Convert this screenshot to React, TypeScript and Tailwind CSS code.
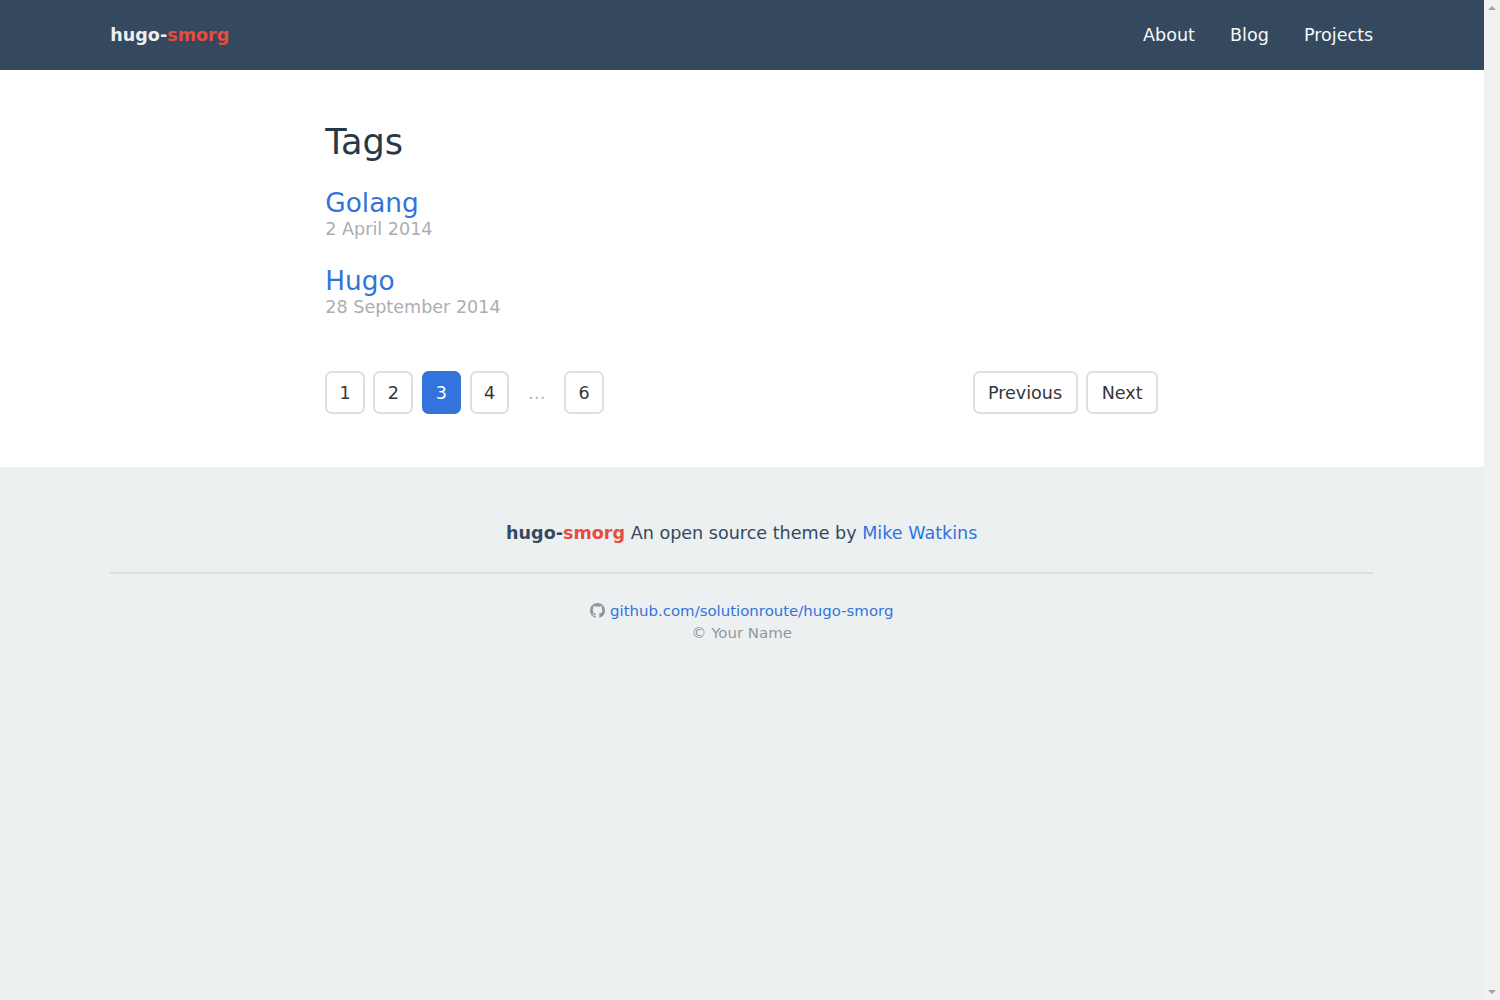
function GithubMark({ className }: { className: string }) {
  return (
    <svg viewBox="0 0 16 16" fill="currentColor" className={className} aria-hidden="true">
      <path d="M8 0C3.58 0 0 3.58 0 8c0 3.54 2.29 6.53 5.47 7.59.4.07.55-.17.55-.38 0-.19-.01-.82-.01-1.49-2.01.37-2.53-.49-2.69-.94-.09-.23-.48-.94-.82-1.13-.28-.15-.68-.52-.01-.53.63-.01 1.08.58 1.23.82.72 1.21 1.87.87 2.33.66.07-.52.28-.87.51-1.07-1.78-.2-3.64-.89-3.64-3.95 0-.87.31-1.59.82-2.15-.08-.2-.36-1.02.08-2.12 0 0 .67-.21 2.2.82.64-.18 1.32-.27 2-.27s1.36.09 2 .27c1.53-1.04 2.2-.82 2.2-.82.44 1.1.16 1.92.08 2.12.51.56.82 1.27.82 2.15 0 3.07-1.87 3.75-3.65 3.95.29.25.54.73.54 1.48 0 1.07-.01 1.93-.01 2.2 0 .21.15.46.55.38A8.01 8.01 0 0 0 16 8c0-4.42-3.58-8-8-8z" />
    </svg>
  );
}

function Brand({ className }: { className: string }) {
  return (
    <strong className={"font-bold " + className}>
      hugo-<span className="text-[#e74c3c]">smorg</span>
    </strong>
  );
}

const pageBox =
  "flex h-[43px] items-center justify-center rounded-[6.5px] border-2";

function PageLink({ label, current = false }: { label: string; current?: boolean }) {
  return (
    <a
      href="#"
      className={
        pageBox +
        " w-[39.5px] " +
        (current ? "border-[#3273dc] bg-[#3273dc] text-white" : "border-[#dfdfdf] text-[#363636]")
      }
    >
      {label}
    </a>
  );
}

function Tag({ name, date }: { name: string; date: string }) {
  return (
    <article className="h-[78px]">
      <h2 className="text-[26.35px] leading-[29px]">
        <a href="#" className="text-[#3273dc]">{name}</a>
      </h2>
      <p className="leading-[22px] text-[#aaaeb3]">{date}</p>
    </article>
  );
}

export default function App() {
  return (
    <div className="flex h-[1000px] w-[1500px] overflow-hidden bg-[#ecf0f1] font-['DejaVu_Sans',sans-serif] text-[17.57px] leading-[26px]">
      <div className="flex w-[1483.5px] shrink-0 flex-col">
        <header className="flex h-[70px] items-center justify-between bg-[#34495e] px-[110.3px]">
          <Brand className="text-[#ecf0f1]" />
          <nav className="flex gap-[35.1px] text-[#f5f8fa]">
            <a href="#">About</a>
            <a href="#">Blog</a>
            <a href="#">Projects</a>
          </nav>
        </header>
        <main className="h-[397px] bg-white px-[325.3px] pt-[52px]">
          <h1 className="mb-[27px] text-[35.14px] leading-[40px] text-[#283848]">Tags</h1>
          <Tag name="Golang" date="2 April 2014" />
          <Tag name="Hugo" date="28 September 2014" />
          <nav className="mt-[26px] flex justify-between">
            <div className="flex gap-[8.7px]">
              <PageLink label="1" />
              <PageLink label="2" />
              <PageLink label="3" current />
              <PageLink label="4" />
              <span className="flex w-[37.5px] items-center justify-center text-[#b5b5b5]">…</span>
              <PageLink label="6" />
            </div>
            <div className="flex gap-[8.7px]">
              <a href="#" className={pageBox + " w-[105px] border-[#dfdfdf] text-[#363636]"}>Previous</a>
              <a href="#" className={pageBox + " w-[72px] border-[#dfdfdf] text-[#363636]"}>Next</a>
            </div>
          </nav>
        </main>
        <footer className="px-[110.3px] pt-[53px] text-center text-[#34495e]">
          <p>
            <Brand className="text-[#34495e]" /> An open source theme by{" "}
            <a href="#" className="text-[#3273dc]">Mike Watkins</a>
          </p>
          <hr className="mt-[26px] h-[2px] border-0 bg-[#dbdfe0]" />
          <div className="mt-[26px] text-[14.94px] leading-[22px] text-[#8c9999]">
            <p>
              <GithubMark className="mr-[5px] inline size-[15px] align-[-2px]" />
              <a href="#" className="text-[#3273dc]">github.com/solutionroute/hugo-smorg</a>
            </p>
            <p>© Your Name</p>
          </div>
        </footer>
      </div>
      <div className="flex w-[16.5px] shrink-0 flex-col items-center justify-between bg-[#f1f1f1] py-[6px]">
        <span className="border-x-4 border-b-4 border-x-transparent border-b-[#a3a3a3]" />
        <span className="border-x-4 border-t-4 border-x-transparent border-t-[#a3a3a3]" />
      </div>
    </div>
  );
}
